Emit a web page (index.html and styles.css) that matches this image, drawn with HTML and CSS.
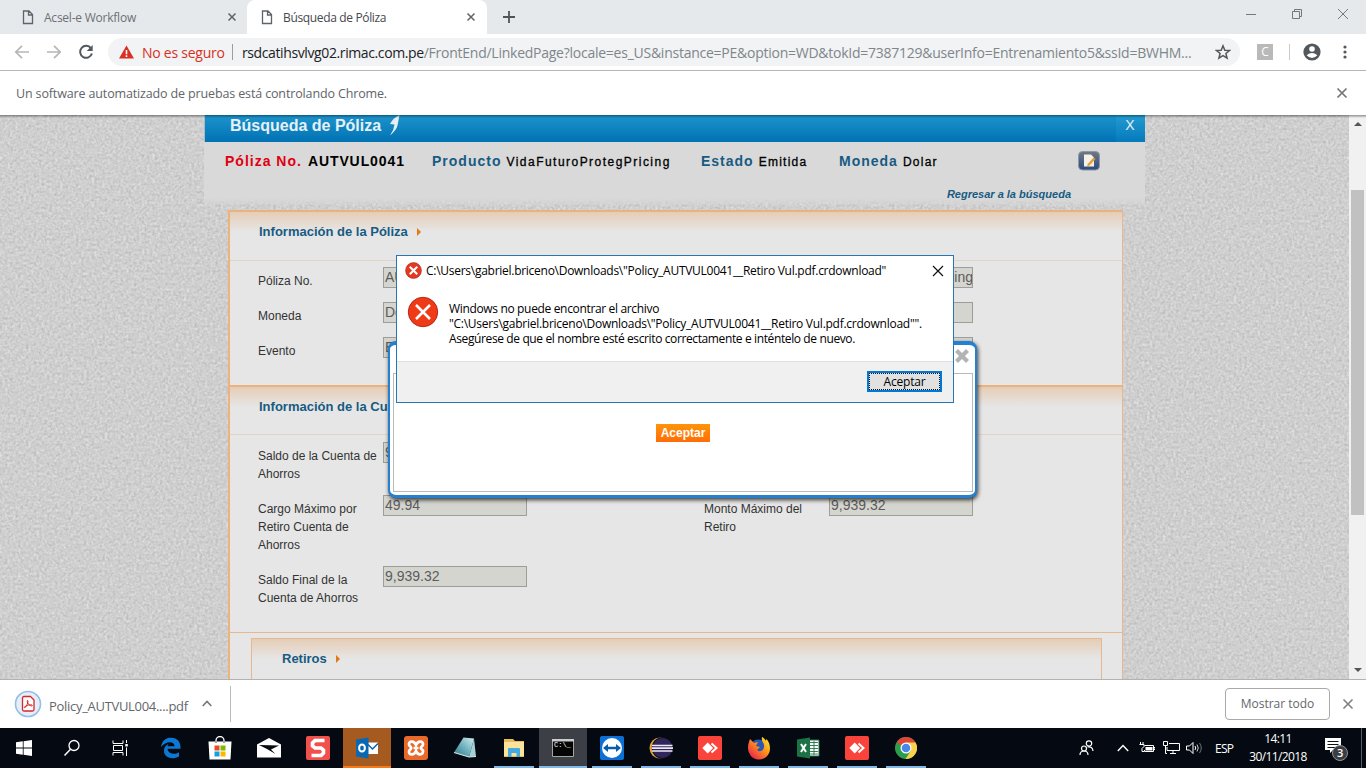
FILE: index.html
```html
<!DOCTYPE html>
<html lang="es">
<head>
<meta charset="utf-8">
<title>Búsqueda de Póliza</title>
<link rel="stylesheet" href="styles.css">
</head>
<body>
<header class="tabs">
  <div class="tab tab-idle">
    <svg class="doc" width="12" height="15" viewBox="0 0 12 15"><path d="M1.500 1H7l3.500 3.500V13.500H1.500ZM6.500 1V5H10.500" fill="none" stroke="#5f6368" stroke-width="1.300"/></svg>
    <span class="tab-name t1">Acsel-e Workflow</span>
    <svg class="x" width="10" height="10" viewBox="0 0 10 10"><path d="M1.500 1.500l7 7m0-7l-7 7" stroke="#5f6368" stroke-width="1.500"/></svg>
  </div>
  <div class="tab tab-active">
    <svg class="doc" width="12" height="15" viewBox="0 0 12 15"><path d="M1.500 1H7l3.500 3.500V13.500H1.500ZM6.500 1V5H10.500" fill="none" stroke="#5f6368" stroke-width="1.300"/></svg>
    <span class="tab-name t2">Búsqueda de Póliza</span>
    <svg class="x" width="10" height="10" viewBox="0 0 10 10"><path d="M1.500 1.500l7 7m0-7l-7 7" stroke="#5f6368" stroke-width="1.500"/></svg>
  </div>
  <div class="newtab"><svg width="12" height="12" viewBox="0 0 12 12"><path d="M6 0v12M0 6h12" stroke="#505458" stroke-width="1.800"/></svg></div>
  <div class="winctl">
    <svg width="12" height="12" viewBox="0 0 12 12"><path d="M1 6.500h10" stroke="#777"/></svg>
    <svg width="12" height="12" viewBox="0 0 12 12"><path d="M1.500 3.500h7v7h-7zM3.500 3.500v-2h7v7h-2" fill="none" stroke="#777"/></svg>
    <svg width="12" height="12" viewBox="0 0 12 12"><path d="M1 1l10 10m0-10L1 11" stroke="#777"/></svg>
  </div>
</header>
<div class="toolbar">
  <div class="nav">
    <svg width="16" height="16" viewBox="0 0 16 16"><path d="M15 8H2M8 1.800L1.800 8L8 14.200" fill="none" stroke="#b4b6b8" stroke-width="1.700"/></svg>
    <svg width="16" height="16" viewBox="0 0 16 16"><path d="M1 8H14M8 1.800L14.200 8L8 14.200" fill="none" stroke="#b4b6b8" stroke-width="1.700"/></svg>
    <svg width="16" height="16" viewBox="0 0 16 16"><path d="M13 4.300A6 6 0 1 0 13.900 9.500" fill="none" stroke="#54585c" stroke-width="2"/><path d="M14.700 1v6H8.700z" fill="#54585c"/></svg>
  </div>
  <div class="omni">
    <svg width="15" height="14" viewBox="0 0 15 14"><path d="M7.500 .500L15 13.500H0z" fill="#d93025"/><path d="M7.500 5v4.200M7.500 10.300v1.600" stroke="#fff" stroke-width="1.600"/></svg>
    <span class="insecure">No es seguro</span><i class="bar"></i>
    <span class="url"><b>rsdcatihsvlvg02.rimac.com.pe</b>/FrontEnd/LinkedPage?locale=es_US&amp;instance=PE&amp;option=WD&amp;tokId=7387129&amp;userInfo=Entrenamiento5&amp;ssId=BWHM...</span>
    <svg class="star" width="16" height="16" viewBox="0 0 16 16"><path d="M8 1.800l1.800 4.400 4.700.300-3.600 3 1.200 4.700L8 11.600l-4.100 2.600 1.200-4.700-3.600-3 4.700-.300z" fill="none" stroke="#54585c" stroke-width="1.500"/></svg>
  </div>
  <span class="ext">C</span><i class="split"></i>
  <svg class="avatar" width="18" height="18" viewBox="0 0 18 18"><circle cx="9" cy="9" r="8.600" fill="#54585c"/><circle cx="9" cy="6" r="2.800" fill="#fff"/><path d="M3.600 12.300Q9 7.800 14.400 12.300Q9 17.800 3.600 12.300z" fill="#fff"/></svg>
  <svg class="dots" width="4" height="14" viewBox="0 0 4 14"><g fill="#54585c"><circle cx="2" cy="2" r="1.600"/><circle cx="2" cy="7" r="1.600"/><circle cx="2" cy="12" r="1.600"/></g></svg>
</div>
<div class="infobar"><span>Un software automatizado de pruebas está controlando Chrome.</span>
  <svg width="12" height="12" viewBox="0 0 12 12"><path d="M1.500 1.500l9 9m0-9l-9 9" stroke="#757575" stroke-width="1.700"/></svg>
</div>

<main class="view">
  <svg class="grain" width="1349" height="565"><filter id="grain" x="0" y="0" width="100%" height="100%" color-interpolation-filters="sRGB"><feTurbulence type="fractalNoise" baseFrequency=".38" numOctaves="2" seed="4"/><feColorMatrix values=".14 .14 0 0 .67 .14 .14 0 0 .67 .14 .14 0 0 .67 0 0 0 0 1"/></filter><rect width="1349" height="565" filter="url(#grain)"/></svg>
  <div class="page">
    <div class="titlebar"><h1>Búsqueda de Póliza</h1>
      <svg width="12" height="22" viewBox="0 0 12 22"><path d="M10.500 0L8.500 10.500Q7.500 15 1 20.500Q5 15 5.500 9.500L1 9Q4 3 10.500 0z" fill="#e4eef4"/></svg>
      <span class="close">X</span></div>
    <div class="summary">
      <div class="facts">
        <span class="fact f1"><b class="red">Póliza No.</b><b class="num">AUTVUL0041</b></span>
        <span class="fact f2"><b>Producto</b><em class="prod">VidaFuturoProtegPricing</em></span>
        <span class="fact f3"><b>Estado</b><em>Emitida</em></span>
        <span class="fact f4"><b>Moneda</b><em>Dolar</em></span>
        <svg class="edit" width="22" height="20" viewBox="0 0 22 20"><defs><linearGradient id="eg" x2="0" y2="1"><stop stop-color="#737982"/><stop offset="1" stop-color="#294a7c"/></linearGradient></defs><rect x=".500" y=".500" width="21" height="18.500" rx="4" fill="url(#eg)" stroke="#8c98aa"/><path d="M6 3.500h7l3 3v9H6z" fill="#f3f1e8"/><path d="M15.500 6.500l2 1.500-6 6.500-2.500 1 .700-2.600z" fill="#e99a3f"/></svg>
      </div>
      <a class="back">Regresar a la búsqueda</a>
    </div>
    <div class="form">
      <section class="sec">
        <h2><span>Información de la Póliza</span><i class="arrow"></i></h2>
        <div class="fields f-a">
          <label>Póliza No.</label><div class="in">AU</div><label></label><div class="in tail"><span>cing</span></div>
          <label>Moneda</label><div class="in">Do</div><label></label><div class="in"></div>
          <label>Evento</label><div class="in">E</div><label></label><div class="in"></div>
        </div>
      </section>
      <section class="sec">
        <h2 class="h-b"><span>Información de la Cu</span></h2>
        <div class="fields f-b">
          <label>Saldo de la Cuenta de Ahorros</label><div class="in">9</div><label></label><div></div>
          <label>Cargo Máximo por Retiro Cuenta de Ahorros</label><div class="in">49.94</div><label>Monto Máximo del Retiro</label><div class="in">9,939.32</div>
          <label>Saldo Final de la Cuenta de Ahorros</label><div class="in">9,939.32</div>
        </div>
      </section>
      <div class="rest"><section class="retiros"><h2><span>Retiros</span><i class="arrow"></i></h2></section></div>
    </div>
  </div>
  <div class="scroll"><i class="up"></i><div class="thumb"></div><i class="down"></i></div>

  <div class="popup">
    <svg class="px" width="16" height="16" viewBox="0 0 16 16"><path d="M2.500 2.500l11 11m0-11l-11 11" stroke="#b1b3b5" stroke-width="4.200"/></svg>
    <div class="pbody"><span class="orange">Aceptar</span></div>
  </div>
  <div class="dialog">
    <div class="dhead">
      <svg width="17" height="17" viewBox="0 0 32 32"><circle cx="16" cy="16" r="15" fill="#e23a22" stroke="#a8281a"/><path d="M9 9l14 14m0-14L9 23" stroke="#fff" stroke-width="3.800"/></svg>
      <span class="dtitle">C:\Users\gabriel.briceno\Downloads\"Policy_AUTVUL0041__Retiro Vul.pdf.crdownload"</span>
      <svg class="dx" width="12" height="12" viewBox="0 0 12 12"><path d="M1 1l10 10m0-10L1 11" stroke="#111" stroke-width="1.200"/></svg>
    </div>
    <div class="dmsg">
      <svg width="32" height="32" viewBox="0 0 32 32"><circle cx="16" cy="16" r="14.700" fill="#f03a17" stroke="#b52a18"/><path d="M9 9l14 14m0-14L9 23" stroke="#fff" stroke-width="2.600"/></svg>
      <p><span class="m1">Windows no puede encontrar el archivo</span><span class="m2">"C:\Users\gabriel.briceno\Downloads\"Policy_AUTVUL0041__Retiro Vul.pdf.crdownload"".</span><span class="m3">Asegúrese de que el nombre esté escrito correctamente e inténtelo de nuevo.</span></p>
    </div>
    <div class="dfoot"><span class="ok"><span>Aceptar</span></span></div>
  </div>
</main>

<div class="downloads">
  <svg width="28" height="28" viewBox="0 0 28 28"><circle cx="14" cy="14" r="12.500" fill="#e8eef8" stroke="#91bfe7" stroke-width="1.600"/><path d="M10 6.500h6.500l3.500 3.500v9.500a1.500 1.500 0 0 1-1.500 1.500h-8.500a1.500 1.500 0 0 1-1.500-1.500V8a1.500 1.500 0 0 1 1.500-1.500z" fill="#fff" stroke="#d8262c" stroke-width="1.300"/><path d="M10.500 16.800c-1 1.500 1 1 2-1s2-4.500 1.300-5.300c-1-.500-.800 2 .700 3.700s3.800 2.200 3.800 1.200-3.500-1-7.800 1.400z" fill="none" stroke="#d8262c" stroke-width="1"/></svg>
  <span class="fname">Policy_AUTVUL004....pdf</span>
  <svg class="chev" width="10" height="7" viewBox="0 0 10 7"><path d="M.700 6L5 1.500 9.300 6" fill="none" stroke="#777" stroke-width="1.600"/></svg>
  <i class="dsep"></i>
  <span class="showall">Mostrar todo</span>
  <svg class="dclose" width="12" height="12" viewBox="0 0 12 12"><path d="M1.500 1.500l9 9m0-9l-9 9" stroke="#808080" stroke-width="1.600"/></svg>
</div>

<footer class="taskbar">
  <div class="sys">
    <span><svg width="16" height="16" viewBox="0 0 16 16"><path d="M0 2.200L6.800 1.300V7.600H0zM7.600 1.200L16 0V7.600H7.600zM0 8.400H6.800V14.700L0 13.800zM7.600 8.400H16V16L7.600 14.800z" fill="#fff"/></svg></span>
    <span><svg width="18" height="18" viewBox="0 0 18 18"><circle cx="11" cy="6.500" r="5" fill="none" stroke="#fff" stroke-width="1.300"/><path d="M7.500 10.200L1.500 16.500" stroke="#fff" stroke-width="1.500"/></svg></span>
    <span><svg width="17" height="16" viewBox="0 0 17 16"><path d="M1 .500V3.500H11V.500M1 15.500V12.500H11V15.500M1.500 5.500h9v5h-9zM14.500 0V3M14.500 7.500V16" fill="none" stroke="#fff"/><path d="M13.300 4h2.500v2.500h-2.500z" fill="#fff"/></svg></span>
  </div>
  <div class="apps">
    <span><svg width="22" height="22" viewBox="0 0 22 22"><path d="M1 10C2 3 6.500 .500 11.500 .800C17.500 1 21 5.500 20.500 11.800H7.600C8 17 14.500 18 19 15.200V19.500C12 23.500 3.500 20.500 4 13.500C4 10.500 6 8 8.500 7C7.800 8 7.600 8.700 7.600 9.200H14.500C14.500 3.500 5.500 4 1 10z" fill="#0c78d4"/></svg></span>
    <span><svg width="24" height="24" viewBox="0 0 24 24"><path d="M8 7V4.500a4 4 0 0 1 8 0V7" fill="none" stroke="#fff" stroke-width="1.300"/><path d="M.500 5.500h23L22.500 23.500H1.500z" fill="#fff"/><path d="M8 5.500v1.500M16 5.500v1.500" stroke="#333"/><path d="M6.500 9.500h5v5h-5z" fill="#e74c25"/><path d="M12.500 9.500h5v5h-5z" fill="#7cb900"/><path d="M6.500 15.500h5v5h-5z" fill="#12a0e5"/><path d="M12.500 15.500h5v5h-5z" fill="#fdb900"/></svg></span>
    <span><svg width="24" height="20" viewBox="0 0 24 20"><path d="M0 6.500L12 0 24 6.500V19.500H0z" fill="#fff"/><path d="M2 7L22 7.500 14 11.500 18.500 16 10 11z" fill="#060b12"/></svg></span>
    <span><svg width="24" height="24" viewBox="0 0 24 24"><rect width="24" height="24" rx="2" fill="#f1504d"/><path d="M18.500 4.500H9L6.500 7v3L9 12h6l2.500 2v3L15 19.500H5.500" fill="none" stroke="#fff" stroke-width="3.600"/></svg></span>
    <span class="mail"><svg width="24" height="22" viewBox="0 0 24 22"><path d="M12 5.500H23V17H12z" fill="#fff"/><path d="M12.500 7l5 5L23 6.500" fill="none" stroke="#0a64ad" stroke-width="1.500"/><path d="M1 2.500L13.500 .500V21.500L1 19.500z" fill="#0968b2"/><ellipse cx="7" cy="11" rx="2.900" ry="3.600" fill="none" stroke="#fff" stroke-width="2"/></svg></span>
    <span><svg width="24" height="24" viewBox="0 0 24 24"><rect width="24" height="24" rx="3" fill="#e9692b"/><path d="M12 9C10 4 4.500 5 5 8.500c.300 2 2.200 2 2.200 3.500S5.300 13.500 5 15.500C4.500 19 10 20 12 15c2 5 7.500 4 7-.500-.300-1-2.200-1-2.200-2.500s1.900-1.500 2.200-3.500C19.500 5 14 4 12 9zM9.500 12h5" fill="none" stroke="#fff" stroke-width="2.700"/></svg></span>
    <span><svg width="24" height="24" viewBox="0 0 24 24"><defs><linearGradient id="ng" x1="1" x2="0" y2="1"><stop stop-color="#d4eff2"/><stop offset=".5" stop-color="#6eb2bd"/><stop offset="1" stop-color="#2d7483"/></linearGradient></defs><path d="M10.500 1.500L21 2.500 16 21 1 16.500z" fill="url(#ng)"/><path d="M21 2.500L23 20.500 16 21z" fill="#a5d0d6"/><path d="M1 16.500l15 4.500 7-.500" fill="none" stroke="#d5e7e8" stroke-width="1.100"/></svg></span>
    <span class="run"><svg width="22" height="20" viewBox="0 0 22 20"><path d="M1 2V1h9l2 2h9v16H1z" fill="#e9bd55"/><path d="M1 4h20v14H1z" fill="#fbe39b"/><path d="M5 19V11q0-1 1-1h10q1 0 1 1v8h-3.500v-4h-5v4z" fill="#45aadf"/></svg></span>
    <span class="run lit"><svg width="22" height="18" viewBox="0 0 22 18"><path d="M.500 .500h21v17H.500z" fill="#050505" stroke="#a5a5a5"/><path d="M0 0h22v2.500H0z" fill="#ccc"/></svg><small class="cmd">C:\_</small></span>
    <span class="run"><svg width="24" height="24" viewBox="0 0 24 24"><rect width="24" height="24" rx="2" fill="#0d70d5"/><circle cx="12" cy="12" r="10" fill="#fff"/><path d="M3 12l5-4v2.800h8V8L21 12l-5 4v-2.800H8V16z" fill="#075dad"/></svg></span>
    <span class="run"><svg width="25" height="22" viewBox="0 0 25 22"><circle cx="11" cy="11" r="10.500" fill="#e8a33b"/><circle cx="13.500" cy="11" r="10.800" fill="#0a0d18"/><circle cx="13.500" cy="11" r="10" fill="#31265b"/><path d="M3 8.500h20.500M2.800 11.200h21.200M3 14h20.500" stroke="#eeeaf5" stroke-width="1.700"/></svg></span>
    <span class="run"><svg width="24" height="24" viewBox="0 0 24 24"><rect width="24" height="24" rx="2" fill="#fa433b"/><path d="M4.300 12L9.700 6.600 15.100 12 9.700 17.400z" fill="#fff"/><path d="M13.500 7.500L18.500 12l-5 4.500" fill="none" stroke="#fff" stroke-width="2"/></svg></span>
    <span class="run"><svg width="24" height="24" viewBox="0 0 24 24"><defs><linearGradient id="fg" x1=".9" x2=".1" y1="0" y2=".9"><stop stop-color="#ffe82f"/><stop offset=".45" stop-color="#ff941a"/><stop offset="1" stop-color="#e9204d"/></linearGradient></defs><circle cx="11.500" cy="12" r="8.500" fill="#2857b4"/><path d="M3 3l4 4 4-1-2 4 4 1-3 3c3 3 8 0 7-5-.500-3-3-4-2-8 2 1 3 2 4 4V3c3 2 4 6 4 10A11 11 0 0 1 1 12C1 8 2 6 3 3z" fill="url(#fg)"/></svg></span>
    <span class="run"><svg width="23" height="22" viewBox="0 0 23 22"><path d="M11 3h11v16H11z" fill="#fff" stroke="#217346"/><path d="M13 5.500h8M13 8.500h8M13 11.500h8M13 14.500h8M13 17h8M17 4v14" stroke="#217346" stroke-width=".900"/><path d="M0 2.500L13 .500v21L0 19.500z" fill="#1b7244"/><path d="M4 7l5 8M9 7l-5 8" stroke="#fff" stroke-width="2"/></svg></span>
    <span class="run"><svg width="24" height="24" viewBox="0 0 24 24"><rect width="24" height="24" rx="2" fill="#fa433b"/><path d="M4.300 12L9.700 6.600 15.100 12 9.700 17.400z" fill="#fff"/><path d="M13.500 7.500L18.500 12l-5 4.500" fill="none" stroke="#fff" stroke-width="2"/></svg></span>
    <span class="run"><svg width="22" height="22" viewBox="0 0 22 22"><circle cx="11" cy="11" r="11" fill="#2b9e4b"/><path d="M11 11L1.500 5.500A11 11 0 0 1 20.500 5.500z" fill="#dd4639"/><path d="M11 5.500h9.500A11 11 0 0 1 10.500 22L15.800 13.700z" fill="#fbd14a"/><circle cx="11" cy="11" r="5.500" fill="#fff"/><circle cx="11" cy="11" r="4.300" fill="#4b87e8"/></svg></span>
  </div>
  <div class="tray">
    <svg class="people" width="15" height="16" viewBox="0 0 15 16"><g fill="none" stroke="#fff" stroke-width="1.200"><circle cx="10" cy="3.500" r="2.700"/><path d="M8.500 7Q13.500 6 14 11"/><circle cx="5" cy="8.500" r="2.500"/><path d="M1 15Q1 11 5 11T9 15"/></g></svg>
    <svg class="up2" width="12" height="8" viewBox="0 0 12 8"><path d="M.800 7L6 1.500 11.200 7" fill="none" stroke="#fff" stroke-width="1.400"/></svg>
    <svg class="bat" width="16" height="12" viewBox="0 0 16 12"><path d="M5.500 3.500h9v6h-9V8M14.500 5.500H16v2h-1.500M1.500 0v2M4 0v2M0.500 2.500h4.500v2L3 6.500v3h2" fill="none" stroke="#fff"/><path d="M6.500 5h7v3.500h-7z" fill="#fff"/></svg>
    <svg class="net" width="17" height="14" viewBox="0 0 17 14"><path d="M6 2.500h10.500v7H4V6M7 12.500h6M10 9.500v3M.500 .500h4v4h-4zM2.500 5v7.500H4" fill="none" stroke="#fff"/></svg>
    <svg class="vol" width="17" height="14" viewBox="0 0 17 14"><path d="M.500 5h3L7 1.500v11L3.500 9h-3zM9 5Q10.500 7 9 9" fill="none" stroke="#fff"/><path d="M11 3.500Q13.500 7 11 10.500" fill="none" stroke="#ccc"/><path d="M13.500 2Q17 7 13.500 12" fill="none" stroke="#70757a"/></svg>
    <span class="esp">ESP</span>
    <span class="clock"><span>14:11</span><span class="date">30/11/2018</span></span>
    <span class="note"><svg width="26" height="24" viewBox="0 0 26 24"><path d="M0 1h16v12H8L5 16v-3H0z" fill="#fff"/><path d="M2.500 4.500h11M2.500 7.500h11M2.500 10.500h8" stroke="#111"/><circle cx="15" cy="16" r="7.500" fill="#3b3d41" stroke="#90949a"/></svg><b>3</b></span>
    <i class="desk"></i>
  </div>
</footer>
</body>
</html>
```
FILE: styles.css
```css
* { box-sizing: border-box; }
body { margin: 0; width: 1366px; height: 768px; overflow: hidden; display: flex; flex-direction: column; background: #fff; font-family: "Open Sans", "Noto Sans", sans-serif; font-size: 12px; color: #333; white-space: nowrap; }
svg { display: block; flex: none; }
h1, h2, p { margin: 0; }
i { display: block; flex: none; }

.tabs { height: 34px; flex: none; display: flex; background: #e6e9ec; }
.tab { display: flex; align-items: center; height: 34px; }
.tab-idle { width: 247px; padding: 0 10px 0 22px; }
.tab-active { width: 240px; padding: 0 11px 0 14px; background: #fff; border-radius: 8px 8px 0 0; }
.tab-name { flex: 1; margin-left: 10px; color: #45494d; letter-spacing: -.35px; }
.tab-idle .tab-name { color: #6c7074; letter-spacing: -.23px; }
.newtab { padding: 11px 0 0 16px; }
.winctl { margin-left: auto; display: flex; gap: 34px; padding: 8px 17px 0 0; }

.toolbar { height: 37px; flex: none; display: flex; align-items: center; border-bottom: 1px solid #b6b6b6; }
.nav { display: flex; gap: 16px; margin-left: 14px; width: 94px; }
.omni { display: flex; align-items: center; width: 1132px; height: 28px; border-radius: 14px; background: #f1f3f4; padding-left: 11px; font-size: 14px; }
.insecure { color: #d93025; margin-left: 8px; width: 83px; letter-spacing: -.25px; }
.bar { width: 1px; height: 16px; background: #9a9da1; margin: 0 9px 0 7px; }
.url { color: #80868b; letter-spacing: -.25px; width: 962px; }
.url b { font-weight: 400; color: #202124; letter-spacing: -.39px; }
.star { margin-left: 11px; }
.ext { width: 16px; height: 16px; margin-left: 17px; background: #b9b9b9; color: #fff; font-size: 12px; line-height: 16px; text-align: center; }
.split { width: 1px; height: 16px; background: #c8cacc; margin: 0 13px 0 16px; }
.dots { margin-left: 22px; }

.infobar { height: 44px; flex: none; display: flex; align-items: center; justify-content: space-between; padding: 0 18px 0 16px; color: #616569; letter-spacing: -.14px; font-size: 12.500px; }

.view { position: relative; height: 564px; flex: none; display: flex; overflow: hidden; font-family: "Liberation Sans", Arial, sans-serif; background: #cfcfcf; }
.grain { position: absolute; left: 0; top: 0; }
.view::after { content: ""; position: absolute; left: 0; top: 0; width: 100%; height: 3px; background: linear-gradient(rgba(0,0,0,.4), transparent); }
.page { position: relative; margin-left: 204px; width: 941px; height: 564px; }
.titlebar { height: 27px; display: flex; background: linear-gradient(#1d94cc, #0172b4); color: #e6f0f6; border-left: 1px solid #a5bcc8; }
.titlebar h1 { font-size: 16px; line-height: 21px; margin: 0 7px 0 25px; width: 152px; }
.close { margin-left: auto; width: 29px; text-align: center; font-size: 14px; line-height: 21px; padding-right: 1px; background: linear-gradient(#249bd0, #057abc); }
.summary { height: 63px; background: linear-gradient(#d9d9d9 56px, rgba(217,217,217,.3)); padding: 10px 0 0 21px; }
.facts { display: flex; height: 19px; align-items: flex-start; line-height: 19px; }
.fact { display: flex; }
.fact b { color: #175b82; font-size: 14px; letter-spacing: 1px; }
.fact .red { color: #e00012; letter-spacing: 1px; }
.fact .num { color: #000; margin-left: 6px; letter-spacing: .9px; }
.fact em { font-style: normal; color: #000; font-size: 12px; line-height: 21px; letter-spacing: 1.250px; margin-left: 5px; -webkit-text-stroke: .3px #000; }
.fact .prod { letter-spacing: 1.470px; }
.f1 { width: 207px; } .f2 { width: 269px; } .f3 { width: 138px; } .f4 { width: 239px; }
.edit { margin-top: -1px; }
.back { display: block; margin: 14px 74px 0 0; text-align: right; color: #175b82; font: italic bold 11px/18px "Liberation Sans", sans-serif; }
.form { margin: 5px 0 0 24px; width: 895px; height: 474px; border-left: 2px solid #eeb27c; border-right: 1px solid #e5b88d; background: #e6e6e6; }
.sec { border-top: 2px solid #eab27f; }
.sec h2, .retiros h2 { display: flex; align-items: center; height: 49px; padding: 0 0 9px 29px; font-size: 13px; color: #175b82; background: linear-gradient(#e5cdb6, #e6e6e6 20px); border-bottom: 1px solid #e3d3c4; }
.sec h2.h-b { height: 48px; padding-bottom: 9px; }
.arrow { border: 4px solid transparent; border-left: 4px solid #e27912; border-right: 0; margin-left: 9px; }
.fields { display: grid; grid-template-columns: 125px 144px 177px 125px 144px; padding: 6px 0 13px 28px; white-space: normal; }
.fields label { color: #333; font-size: 12px; line-height: 18px; padding: 5px 0 12px; min-height: 35px; }
.fields label:nth-child(4n+3) { grid-column: 4; }
.fields > :nth-child(4n+1) { grid-column: 1; }
.f-b { padding-top: 7px; }
.f-b label { padding-right: 2px; }
.in { height: 21px; background: #d5d5cf; border: 1px solid #9d9d9a; padding: 0 1px; font-size: 14px; line-height: 19px; color: #5c5c5c; overflow: hidden; white-space: nowrap; }
.tail { display: flex; justify-content: flex-end; }
.tail span { margin-right: -2px; }
.rest { border-top: 1px solid #e5b88d; height: 47px; padding: 5px 20px 0 21px; }
.retiros { height: 41px; border: 1px solid #e5b88d; border-bottom: 0; }
.retiros h2 { height: 40px; padding: 0 0 1px 30px; border: 0; }
.scroll { position: relative; width: 17px; margin-left: auto; background: #f1f1f1; display: flex; flex-direction: column; align-items: center; }
.thumb { width: 13px; height: 325px; background: #c1c1c1; margin-top: 68px; }
.up { border: 4px solid transparent; border-bottom: 4px solid #555; border-top: 0; margin-top: 7px; margin-bottom: -4px; }
.down { border: 4px solid transparent; border-top: 4px solid #555; border-bottom: 0; margin: auto 0 7px; }

.popup { position: absolute; left: 388px; top: 226px; width: 589px; height: 157px; background: #fff; border: 3px solid #2680d0; border-width: 4px 2px 3px 2px; border-radius: 8px; padding: 28px 2px 3px 3px; box-shadow: 1px 2px 4px rgba(0,0,0,.75); }
.px { position: absolute; right: 5px; top: 3px; }
.pbody { height: 119px; border: 1px solid #b9b9b9; padding-top: 50px; }
.orange { display: block; width: 54px; height: 18px; margin: 0 auto; background: linear-gradient(#ff9408, #ff6d08); color: #fff; font-size: 12px; font-weight: bold; line-height: 18px; text-align: center; }
.dialog { position: absolute; left: 396px; top: 140px; width: 558px; height: 148px; background: #fff; border: 1px solid #2678b5; display: flex; flex-direction: column; font-family: "Open Sans", "Noto Sans", sans-serif; color: #000; }
.dhead { height: 29px; display: flex; align-items: center; padding: 0 9px 0 8px; }
.dtitle { margin-left: 4px; letter-spacing: -.27px; }
.dx { margin-left: auto; }
.dmsg { height: 76px; display: flex; padding: 11px 0 0 10px; }
.dmsg p { margin: 5px 0 0 10px; line-height: 15px; letter-spacing: -.26px; }
.dmsg p span { display: block; }
.dmsg .m1 { letter-spacing: -.34px; }
.dmsg .m3 { letter-spacing: -.38px; }
.dfoot { flex: 1; background: #f0f0f0; border-top: 1px solid #dfdfdf; padding: 9px 11px; }
.ok { display: block; margin-left: auto; width: 75px; height: 21px; border: 2px solid #0078d7; background: #e1e1e1; }
.ok span { display: block; height: 17px; border: 1px dotted #111; line-height: 16px; text-align: center; letter-spacing: -.2px; }

.downloads { height: 49px; flex: none; display: flex; align-items: center; border-top: 1px solid #b2b2b2; padding: 0 12px 1px 14px; }
.fname { margin: 5px 0 0 7px; width: 139px; font-size: 13px; color: #63676b; letter-spacing: -.3px; }
.chev { margin-left: 14px; }
.dsep { width: 1px; height: 36px; background: #bbb; margin-left: 18px; }
.showall { margin-left: auto; width: 105px; height: 32px; border: 1px solid #a9a9a9; border-radius: 4px; text-align: center; line-height: 29px; color: #63676b; }
.dclose { margin-left: 12px; }

.taskbar { height: 40px; flex: none; display: flex; background: #050a12; color: #fff; }
.sys { display: flex; width: 147px; }
.sys span { width: 48px; display: flex; align-items: center; justify-content: center; }
.apps { display: flex; gap: 1px; }
.apps > span { position: relative; width: 48px; height: 40px; display: flex; align-items: center; justify-content: center; }
.apps .run { background: linear-gradient(#80b8e8, #80b8e8) 50% 100% / 40px 2px no-repeat; }
.apps .lit { background: linear-gradient(#80b8e8, #80b8e8) 50% 100% / 48px 2px no-repeat #3c4046; }
.apps .mail { background: #a55a20; border-bottom: 2px solid #f77a18; padding-top: 2px; }
.cmd { position: absolute; left: 15px; top: 13px; font: 7px/8px "Liberation Mono", monospace; color: #fff; }
.tray { margin-left: auto; display: flex; align-items: center; }
.up2 { margin-left: 23px; }
.bat { margin-left: 10px; }
.net { margin-left: 8px; }
.vol { margin-left: 6px; }
.esp { margin-left: 12px; width: 20px; letter-spacing: -.7px; }
.clock { display: flex; flex-direction: column; align-items: center; margin-left: 12px; width: 62px; line-height: 18px; letter-spacing: -.6px; }
.date { letter-spacing: -.6px; }
.note { position: relative; margin-left: 16px; padding-top: 1px; }
.note b { position: absolute; left: 12px; top: 9px; font-size: 11px; line-height: 16px; font-weight: 600; }
.desk { width: 1px; height: 40px; margin: 0 4px 0 10px; background: #555b62; }
```
